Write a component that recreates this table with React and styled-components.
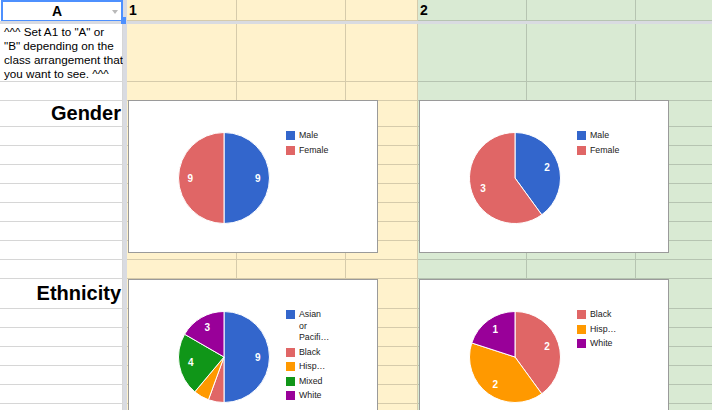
import React from 'react';
import styled, { createGlobalStyle } from 'styled-components';

const GlobalStyle = createGlobalStyle`
  body {
    margin: 0;
    background: #fff;
    font-family: "Liberation Sans", Arial, sans-serif;
  }
`;

const palette = {
  white: '#ffffff',
  yellow: '#fff2cc',
  green: '#d9ead3',
  frozen: '#d9dbe1',
  select: '#4d90fe',
  grid: 'rgba(0, 0, 0, 0.16)',
};

const colors = {
  blue: '#3366cc',
  red: '#e06666',
  orange: '#ff9900',
  green: '#109618',
  purple: '#990099',
};

// gutter, A, frozen bar, B..G
const columns = [
  { w: 3, tone: 'white' },
  { w: 120, tone: 'white' },
  { w: 4, sep: true },
  { w: 110, tone: 'yellow' },
  { w: 109, tone: 'yellow' },
  { w: 72, tone: 'yellow' },
  { w: 109, tone: 'green' },
  { w: 109, tone: 'green' },
  { w: 109, tone: 'green' },
];

const rowHeights = [
  21, 3, 58, 19, 26, 19, 19, 19, 19, 19, 19, 19, 19, 30, 19, 19, 19, 19, 19, 19,
];

const Page = styled.div`
  width: 712px;
  height: 410px;
  overflow: hidden;
`;

const Sheet = styled.div`
  position: relative;
  display: grid;
  grid-template-columns: ${(p) => p.$cols};
  grid-template-rows: ${(p) => p.$rows};
  width: max-content;
`;

const Cell = styled.div`
  background: ${(p) => palette[p.$tone]};
  border-right: 1px solid ${palette.grid};
  border-bottom: 1px solid ${palette.grid};
  display: flex;
  align-items: ${(p) => (p.$top ? 'flex-start' : 'center')};
  justify-content: ${(p) => (p.$right ? 'flex-end' : 'flex-start')};
  padding: ${(p) => (p.$top ? '1px 0 0 1px' : '0 1px 0 2px')};
  white-space: nowrap;
  min-width: 0;
  box-sizing: border-box;
`;

const FrozenCol = styled.div`
  grid-column: 3;
  grid-row: 1 / -1;
  background: ${palette.frozen};
`;

const FrozenRow = styled.div`
  grid-column: 1 / -1;
  grid-row: 2;
  background: ${palette.frozen};
`;

const ActiveCell = styled.div`
  grid-column: 1 / 3;
  grid-row: 1;
  position: relative;
  margin-left: 1px;
  border: 2px solid ${palette.select};
  border-bottom-width: 1px;
  background: #fff;
  display: flex;
  align-items: center;
  justify-content: center;
  padding-right: 10px;
  font-size: 14px;
  font-weight: bold;
  z-index: 2;
`;

const DropArrow = styled.span`
  position: absolute;
  right: 3px;
  top: 8px;
  width: 0;
  height: 0;
  border-left: 3px solid transparent;
  border-right: 3px solid transparent;
  border-top: 4px solid #b9b9b9;
`;

const FillHandle = styled.span`
  position: absolute;
  right: -5px;
  bottom: -4px;
  width: 5px;
  height: 7px;
  background: ${palette.select};
`;

const HeaderNumber = styled.span`
  font-size: 14px;
  font-weight: bold;
  color: #000;
`;

const Note = styled.div`
  font-size: 11.7px;
  line-height: 14px;
  color: #000;
`;

const Section = styled.span`
  font-size: 20px;
  font-weight: bold;
  color: #000;
`;

const ChartFrame = styled.div`
  position: absolute;
  left: ${(p) => p.$x}px;
  top: ${(p) => p.$y}px;
  width: 250px;
  height: 153px;
  box-sizing: border-box;
  border: 1px solid #9a9a9a;
  background: #fff;
  display: flex;
  align-items: flex-start;
  padding: 31px 0 0 49px;
  z-index: 3;
`;

const Legend = styled.ul`
  list-style: none;
  margin: -2px 0 0 16px;
  padding: 0;
  font-size: 8.8px;
  line-height: 11.5px;
  color: #222;
`;

const LegendItem = styled.li`
  display: flex;
  gap: 4px;
  margin-bottom: 3px;
`;

const Swatch = styled.span`
  flex: none;
  width: 9px;
  height: 9px;
  margin-top: 1.25px;
  background: ${(p) => p.$color};
`;

const Pie = ({ slices, size = 92 }) => {
  const total = slices.reduce((s, x) => s + x.value, 0);
  const c = size / 2;
  const r = size / 2 - 0.5;
  const pt = (a, rad) => [c + rad * Math.sin(a), c - rad * Math.cos(a)];
  let acc = 0;
  const parts = slices.map((s) => {
    const a0 = (acc / total) * Math.PI * 2;
    acc += s.value;
    const a1 = (acc / total) * Math.PI * 2;
    return { ...s, a0, a1 };
  });

  return (
    <svg width={size} height={size} viewBox={`0 0 ${size} ${size}`}>
      {parts.map((s) => {
        const [x0, y0] = pt(s.a0, r);
        const [x1, y1] = pt(s.a1, r);
        const large = s.a1 - s.a0 > Math.PI ? 1 : 0;
        return (
          <path
            key={s.label}
            d={`M${c} ${c} L${x0} ${y0} A${r} ${r} 0 ${large} 1 ${x1} ${y1} Z`}
            fill={s.color}
            stroke="#fff"
            strokeWidth={1}
          />
        );
      })}
      {parts
        .filter((s) => s.value / total >= 0.1)
        .map((s) => {
          const [x, y] = pt((s.a0 + s.a1) / 2, r * 0.74);
          return (
            <text
              key={s.label}
              x={x}
              y={y}
              fill="#fff"
              fontSize="10"
              fontWeight="bold"
              fontFamily="Liberation Sans, Arial, sans-serif"
              textAnchor="middle"
              dominantBaseline="central"
            >
              {s.value}
            </text>
          );
        })}
    </svg>
  );
};

const Chart = ({ x, y, slices }) => (
  <ChartFrame $x={x} $y={y}>
    <Pie slices={slices} />
    <Legend>
      {slices.map((s) => (
        <LegendItem key={s.label}>
          <Swatch $color={s.color} />
          <span>
            {s.lines.map((l, i) => (
              <React.Fragment key={i}>
                {i > 0 && <br />}
                {l}
              </React.Fragment>
            ))}
          </span>
        </LegendItem>
      ))}
    </Legend>
  </ChartFrame>
);

const charts = [
  {
    x: 128,
    y: 100,
    slices: [
      { label: 'm', lines: ['Male'], value: 9, color: colors.blue },
      { label: 'f', lines: ['Female'], value: 9, color: colors.red },
    ],
  },
  {
    x: 419,
    y: 100,
    slices: [
      { label: 'm', lines: ['Male'], value: 2, color: colors.blue },
      { label: 'f', lines: ['Female'], value: 3, color: colors.red },
    ],
  },
  {
    x: 128,
    y: 279,
    slices: [
      { label: 'a', lines: ['Asian', 'or', 'Pacifi…'], value: 9, color: colors.blue },
      { label: 'b', lines: ['Black'], value: 1, color: colors.red },
      { label: 'h', lines: ['Hisp…'], value: 1, color: colors.orange },
      { label: 'x', lines: ['Mixed'], value: 4, color: colors.green },
      { label: 'w', lines: ['White'], value: 3, color: colors.purple },
    ],
  },
  {
    x: 419,
    y: 279,
    slices: [
      { label: 'b', lines: ['Black'], value: 2, color: colors.red },
      { label: 'h', lines: ['Hisp…'], value: 2, color: colors.orange },
      { label: 'w', lines: ['White'], value: 1, color: colors.purple },
    ],
  },
];

const columnA = {
  2: (
    <Note>
      ^^^ Set A1 to "A" or
      <br />
      "B" depending on the
      <br />
      class arrangement that
      <br />
      you want to see. ^^^
    </Note>
  ),
  4: <Section>Gender</Section>,
  13: <Section>Ethnicity</Section>,
};

const headerText = { 3: '1', 6: '2' };

const App = () => {
  const cells = [];
  rowHeights.forEach((_, r) => {
    if (r === 1) return;
    columns.forEach((col, c) => {
      if (col.sep) return;
      if (r === 0 && c < 2) return;
      const content = r === 0 ? headerText[c] : c === 1 ? columnA[r] : null;
      cells.push(
        <Cell
          key={`${r}-${c}`}
          $tone={col.tone}
          $top={r === 2 && c === 1}
          $right={c === 1 && r !== 2}
          style={{ gridRow: r + 1, gridColumn: c + 1 }}
        >
          {r === 0 && content ? <HeaderNumber>{content}</HeaderNumber> : content}
        </Cell>
      );
    });
  });

  return (
    <Page>
      <GlobalStyle />
      <Sheet
        $cols={columns.map((c) => `${c.w}px`).join(' ')}
        $rows={rowHeights.map((h) => `${h}px`).join(' ')}
      >
        <ActiveCell>
          A
          <DropArrow />
          <FillHandle />
        </ActiveCell>
        {cells}
        <FrozenCol />
        <FrozenRow />
        {charts.map((ch, i) => (
          <Chart key={i} {...ch} />
        ))}
      </Sheet>
    </Page>
  );
};

export default App;
